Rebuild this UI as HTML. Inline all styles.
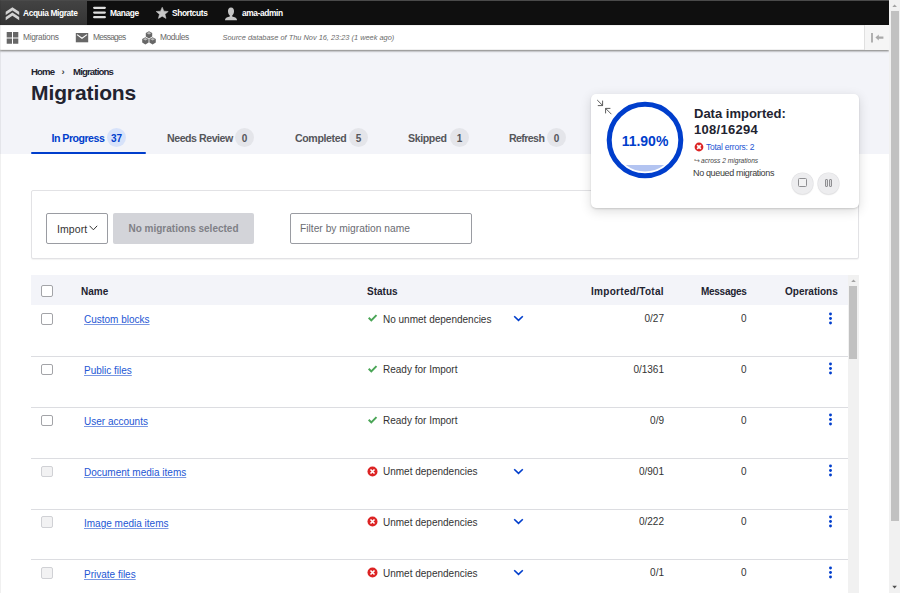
<!DOCTYPE html>
<html><head><meta charset="utf-8">
<style>
*{box-sizing:border-box;margin:0;padding:0}
html,body{width:900px;height:593px;overflow:hidden;background:#fff;font-family:"Liberation Sans",sans-serif;color:#222330}
.abs{position:absolute}
#page{position:absolute;left:0;top:0;width:889px;height:593px;overflow:hidden;background:#fff}
/* toolbar */
#bar{position:absolute;left:0;top:0;width:889px;height:25px;background:#0f0f0f;border-top:1px solid #4a4a4a}
#bar .t{position:absolute;top:-0.5px;height:24px;line-height:24px;color:#fff;font-weight:bold;font-size:8.4px;letter-spacing:-0.4px;white-space:nowrap}
#acq{position:absolute;left:0;top:0;width:87px;height:24px;background:linear-gradient(#434343,#343434)}
#tray{position:absolute;left:0;top:25px;width:889px;height:25px;background:#fff;box-shadow:inset 0 -1px 0 #f0f0f0,inset 0 1px 0 #f2f2f2,0 1px 2px 0 rgba(0,0,0,.55)}
#tray .t{position:absolute;top:0;height:25px;line-height:25px;color:#6a6a6a;font-size:8.4px;letter-spacing:-0.3px;white-space:nowrap}
#toggle{position:absolute;left:864px;top:0;width:25px;height:25px;background:#f5f5f5;border-left:1px solid #e0e0e0}
#hdr{position:absolute;left:0;top:51px;width:889px;height:103px;background:#f3f4f9}
.crumb{position:absolute;top:65.7px;font-size:9.6px;font-weight:bold;letter-spacing:-0.85px;color:#222330;white-space:nowrap;line-height:12px}
#title{position:absolute;left:31px;top:80.7px;font-size:21px;font-weight:bold;letter-spacing:-0.1px;line-height:24px;color:#222330}
.tab{position:absolute;top:130.8px;font-size:10.6px;font-weight:bold;color:#55565b;white-space:nowrap;line-height:14px}
.cnt{position:absolute;top:128px;width:19px;height:19px;border-radius:50%;background:#e4e5ea;font-size:10px;font-weight:bold;color:#55565b;text-align:center;line-height:21px}
/* scrollbar */
#sb{position:absolute;left:889px;top:0;width:11px;height:593px;background:#f1f1f1}
#sbthumb{position:absolute;left:2px;top:11px;width:8px;height:510px;background:#c1c1c1}
/* filter */
#filter{position:absolute;left:30.5px;top:189.8px;width:828px;height:69.2px;border:1px solid #e2e2e5;border-radius:2px;background:#fff;box-shadow:0 1px 1px rgba(0,0,0,.05)}
.sel{position:absolute;left:46px;top:213px;width:62px;height:31px;border:1px solid #9a9ca2;border-radius:2px;background:#fff}
.btn{position:absolute;left:113px;top:213px;width:141px;height:31px;border-radius:2px;background:#d3d4d9;color:#7f8086;font-weight:bold;font-size:10px;text-align:center;line-height:32px}
.inp{position:absolute;left:290px;top:213px;width:182px;height:31px;border:1px solid #9a9ca2;border-radius:2px;background:#fff;color:#6b6c72;font-size:10.25px;line-height:30.4px;padding-left:9px}
/* table */
#thead{position:absolute;left:31px;top:275px;width:817px;height:30px;background:#f3f4f9}
.th{position:absolute;top:285px;font-size:10px;font-weight:bold;color:#222330;line-height:13px;white-space:nowrap}
.cb{position:absolute;left:41px;width:11.5px;height:11.5px;border:1px solid #a3a4a8;border-radius:2px;background:#fff}
.cb.dis{border-color:#d0d1d5;background:#f2f2f3}
.row{position:absolute;left:31px;width:817px;height:1px;background:#dcdde1}
.lnk{position:absolute;left:84px;font-size:10px;color:#2456d4;text-decoration:underline;text-decoration-color:#7b98e2;text-underline-offset:0.6px;line-height:13px;white-space:nowrap}
.st{position:absolute;left:383px;font-size:10px;color:#333;line-height:13px;white-space:nowrap}
.num{position:absolute;font-size:10px;color:#333;line-height:13px;text-align:right;white-space:nowrap}
#isb{position:absolute;left:848px;top:275px;width:11px;height:318px;background:#f1f1f1}
#isbthumb{position:absolute;left:1px;top:11px;width:8px;height:73px;background:#c1c1c1}
/* card */
#card{position:absolute;left:591.2px;top:94px;width:267.8px;height:114px;background:#fff;border-radius:5px;box-shadow:0 1px 2px rgba(0,0,0,.14),0 3px 12px rgba(0,0,0,.14)}
</style></head>
<body>
<div id="page">
  <div id="hdr"></div>
  <div id="bar">
    <div id="acq"></div>
    <svg class="abs" style="left:0;top:0" width="22" height="22" viewBox="0 0 22 22"><path d="M5.7 10.8 L12.4 6.3 L19.2 10.8 L19.2 14 L12.4 9.5 L5.7 14 Z M5.7 16 L12.4 11.5 L19.2 16 L19.2 19.2 L12.4 14.7 L5.7 19.2 Z" fill="#d2d2d2"/></svg>
    <svg class="abs" style="left:92px;top:4.2px" width="15" height="15" viewBox="0 0 15 15"><path d="M2.2 2.8 H12.8 M2.2 7.6 H12.8 M2.2 12.2 H12.8" stroke="#dedede" stroke-width="2.3" stroke-linecap="round"/></svg>
    <svg class="abs" style="left:156px;top:5.8px" width="13" height="13" viewBox="0 0 13.6 14" preserveAspectRatio="none"><path d="M6.50 0.30 L8.26 4.47 L12.79 4.82 L9.35 7.83 L10.46 12.28 L6.50 9.90 L2.54 12.28 L3.65 7.83 L0.21 4.82 L4.74 4.47 Z" fill="#c8c8c8" stroke="#c8c8c8" stroke-width="0.6" stroke-linejoin="round"/></svg>
    <svg class="abs" style="left:224px;top:6px" width="14" height="14" viewBox="0 0 14 14"><path d="M7 0.5 C9.2 0.5 10.2 2.3 10 4.8 C9.8 7 8.8 8.2 8.2 8.6 L8.2 9.6 C10.5 10.2 12.7 10.8 13 12.8 L13 13.3 L1 13.3 L1 12.8 C1.3 10.8 3.5 10.2 5.8 9.6 L5.8 8.6 C5.2 8.2 4.2 7 4 4.8 C3.8 2.3 4.8 0.5 7 0.5 Z" fill="#c4c4c4"/></svg>
    <div class="t" style="left:23px">Acquia Migrate</div>
    <div class="t" style="left:110px">Manage</div>
    <div class="t" style="left:172px">Shortcuts</div>
    <div class="t" style="left:242px">ama-admin</div>
  </div>
  <div id="tray">
    <svg class="abs" style="left:6px;top:7px" width="13" height="12" viewBox="0 0 13 12"><path d="M0.7 0 H6 V5.4 H0.7 Z M7 0 H12.3 V5.4 H7 Z M0.7 6.4 H6 V11.8 H0.7 Z M7 6.4 H12.3 V11.8 H7 Z" fill="#676767"/></svg>
    <svg class="abs" style="left:75px;top:8px" width="14" height="10" viewBox="0 0 14 10"><path d="M0.8 0 H13.2 V9.3 H0.8 Z" fill="#676767"/><path d="M2 1.6 L7 5.2 L12 1.6" fill="none" stroke="#fff" stroke-width="1.1"/></svg>
    <svg class="abs" style="left:141px;top:6px" width="16" height="14" viewBox="0 0 16 14"><g fill="#676767"><path d="M8 0.2 L11.2 2 L11.2 5.6 L8 7.4 L4.8 5.6 L4.8 2 Z"/><path d="M4.4 6.2 L7.6 8 L7.6 11.6 L4.4 13.4 L1.2 11.6 L1.2 8 Z"/><path d="M11.6 6.2 L14.8 8 L14.8 11.6 L11.6 13.4 L8.4 11.6 L8.4 8 Z"/></g><g fill="#fff" opacity=".55"><path d="M8 1 L10.3 2.3 L8 3.6 L5.7 2.3 Z"/><path d="M4.4 7 L6.7 8.3 L4.4 9.6 L2.1 8.3 Z"/><path d="M11.6 7 L13.9 8.3 L11.6 9.6 L9.3 8.3 Z"/></g></svg>
    <div class="t" style="left:23px">Migrations</div>
    <div class="t" style="left:93px;letter-spacing:-0.72px">Messages</div>
    <div class="t" style="left:160px;letter-spacing:-0.42px">Modules</div>
    <div class="t" style="left:222.5px;font-style:italic;font-size:7.4px;letter-spacing:0;color:#6a6a6a">Source database of Thu Nov 16, 23:23 (1 week ago)</div>
    <div id="toggle"><svg class="abs" style="left:6px;top:7px" width="14" height="12" viewBox="0 0 14 12"><path d="M1 1 V10.6" stroke="#a9a9a9" stroke-width="1.8"/><path d="M4.4 5.6 L7.8 2.6 V4.4 H12.4 V6.8 H7.8 V8.6 Z" fill="#a9a9a9"/></svg></div>
  </div>

  <div class="crumb" style="left:31px">Home</div>
  <div class="crumb" style="left:61.5px;color:#444">›</div>
  <div class="crumb" style="left:73px">Migrations</div>
  <div id="title">Migrations</div>

  <div class="tab" style="left:51.5px;color:#003ecc;letter-spacing:-0.5px">In Progress</div>
  <div class="cnt" style="left:107px;background:#d7e2fa;color:#003ecc">37</div>
  <div class="abs" style="left:31px;top:152px;width:115px;height:2px;border-radius:1px;background:#003ecc"></div>
  <div class="tab" style="left:167px;letter-spacing:-0.45px">Needs Review</div>
  <div class="cnt" style="left:235px">0</div>
  <div class="tab" style="left:295px;letter-spacing:-0.38px">Completed</div>
  <div class="cnt" style="left:349px">5</div>
  <div class="tab" style="left:408px;letter-spacing:-0.38px">Skipped</div>
  <div class="cnt" style="left:450px">1</div>
  <div class="tab" style="left:509px;letter-spacing:-0.6px">Refresh</div>
  <div class="cnt" style="left:547px">0</div>

  <div id="filter"></div>
  <div class="sel"></div>
  <div class="abs" style="left:57px;top:223px;font-size:10.5px;letter-spacing:0.1px;color:#333;line-height:13px">Import</div>
  <svg class="abs" style="left:88.5px;top:225px" width="10" height="7" viewBox="0 0 10 7"><path d="M0.6 0.8 L4.4 4.8 L8.2 0.8" fill="none" stroke="#333" stroke-width="1"/></svg>
  <div class="btn">No migrations selected</div>
  <div class="inp">Filter by migration name</div>

  <div id="thead"></div>
  <div class="cb" style="top:285px"></div>
  <div class="th" style="left:81px">Name</div>
  <div class="th" style="left:367px">Status</div>
  <div class="th" style="left:591px;letter-spacing:0.3px">Imported/Total</div>
  <div class="th" style="left:701px;letter-spacing:-0.28px">Messages</div>
  <div class="th" style="left:785px">Operations</div>

<!--ROWS-->
  <div class="cb" style="top:313.0px"></div>
  <div class="lnk" style="top:313.4px">Custom blocks</div>
<svg class="abs" style="left:368px;top:314.2px" width="10" height="9" viewBox="0 0 10 9"><path d="M0.7 3.8 L3.3 6.4 L8.5 1.1" fill="none" stroke="#4aa556" stroke-width="2"/></svg>
  <div class="st" style="top:312.5px">No unmet dependencies</div>
<svg class="abs" style="left:513px;top:315.0px" width="11" height="7" viewBox="0 0 11 7"><path d="M1.2 1.2 L5.5 5.4 L9.8 1.2" fill="none" stroke="#003ecc" stroke-width="1.6"/></svg>
  <div class="num" style="right:225px;top:312.0px">0/27</div>
  <div class="num" style="left:741px;top:312.0px">0</div>
<svg class="abs" style="left:828px;top:311.5px" width="5" height="14" viewBox="0 0 5 14"><circle cx="2.5" cy="2" r="1.45" fill="#003ecc"/><circle cx="2.5" cy="6.5" r="1.45" fill="#003ecc"/><circle cx="2.5" cy="11" r="1.45" fill="#003ecc"/></svg>
  <div class="row" style="top:356.00px"></div>
  <div class="cb" style="top:363.85px"></div>
  <div class="lnk" style="top:364.25px">Public files</div>
<svg class="abs" style="left:368px;top:365.05px" width="10" height="9" viewBox="0 0 10 9"><path d="M0.7 3.8 L3.3 6.4 L8.5 1.1" fill="none" stroke="#4aa556" stroke-width="2"/></svg>
  <div class="st" style="top:363.35px">Ready for Import</div>
  <div class="num" style="right:225px;top:362.85px">0/1361</div>
  <div class="num" style="left:741px;top:362.85px">0</div>
<svg class="abs" style="left:828px;top:362.35px" width="5" height="14" viewBox="0 0 5 14"><circle cx="2.5" cy="2" r="1.45" fill="#003ecc"/><circle cx="2.5" cy="6.5" r="1.45" fill="#003ecc"/><circle cx="2.5" cy="11" r="1.45" fill="#003ecc"/></svg>
  <div class="row" style="top:406.85px"></div>
  <div class="cb" style="top:414.7px"></div>
  <div class="lnk" style="top:415.09999999999997px">User accounts</div>
<svg class="abs" style="left:368px;top:415.9px" width="10" height="9" viewBox="0 0 10 9"><path d="M0.7 3.8 L3.3 6.4 L8.5 1.1" fill="none" stroke="#4aa556" stroke-width="2"/></svg>
  <div class="st" style="top:414.2px">Ready for Import</div>
  <div class="num" style="right:225px;top:413.7px">0/9</div>
  <div class="num" style="left:741px;top:413.7px">0</div>
<svg class="abs" style="left:828px;top:413.2px" width="5" height="14" viewBox="0 0 5 14"><circle cx="2.5" cy="2" r="1.45" fill="#003ecc"/><circle cx="2.5" cy="6.5" r="1.45" fill="#003ecc"/><circle cx="2.5" cy="11" r="1.45" fill="#003ecc"/></svg>
  <div class="row" style="top:457.70px"></div>
  <div class="cb dis" style="top:465.55px"></div>
  <div class="lnk" style="top:465.95px">Document media items</div>
<svg class="abs" style="left:367px;top:465.55px" width="11" height="11" viewBox="0 0 11 11"><circle cx="5.5" cy="5.5" r="5" fill="#dc2323"/><path d="M3.5 3.5 L7.5 7.5 M7.5 3.5 L3.5 7.5" stroke="#fff" stroke-width="1.6"/></svg>
  <div class="st" style="top:465.05px">Unmet dependencies</div>
<svg class="abs" style="left:513px;top:467.55px" width="11" height="7" viewBox="0 0 11 7"><path d="M1.2 1.2 L5.5 5.4 L9.8 1.2" fill="none" stroke="#003ecc" stroke-width="1.6"/></svg>
  <div class="num" style="right:225px;top:464.55px">0/901</div>
  <div class="num" style="left:741px;top:464.55px">0</div>
<svg class="abs" style="left:828px;top:464.05px" width="5" height="14" viewBox="0 0 5 14"><circle cx="2.5" cy="2" r="1.45" fill="#003ecc"/><circle cx="2.5" cy="6.5" r="1.45" fill="#003ecc"/><circle cx="2.5" cy="11" r="1.45" fill="#003ecc"/></svg>
  <div class="row" style="top:508.55px"></div>
  <div class="cb dis" style="top:516.4px"></div>
  <div class="lnk" style="top:516.8px">Image media items</div>
<svg class="abs" style="left:367px;top:516.4px" width="11" height="11" viewBox="0 0 11 11"><circle cx="5.5" cy="5.5" r="5" fill="#dc2323"/><path d="M3.5 3.5 L7.5 7.5 M7.5 3.5 L3.5 7.5" stroke="#fff" stroke-width="1.6"/></svg>
  <div class="st" style="top:515.9px">Unmet dependencies</div>
<svg class="abs" style="left:513px;top:518.4px" width="11" height="7" viewBox="0 0 11 7"><path d="M1.2 1.2 L5.5 5.4 L9.8 1.2" fill="none" stroke="#003ecc" stroke-width="1.6"/></svg>
  <div class="num" style="right:225px;top:515.4px">0/222</div>
  <div class="num" style="left:741px;top:515.4px">0</div>
<svg class="abs" style="left:828px;top:514.9px" width="5" height="14" viewBox="0 0 5 14"><circle cx="2.5" cy="2" r="1.45" fill="#003ecc"/><circle cx="2.5" cy="6.5" r="1.45" fill="#003ecc"/><circle cx="2.5" cy="11" r="1.45" fill="#003ecc"/></svg>
  <div class="row" style="top:559.40px"></div>
  <div class="cb dis" style="top:567.25px"></div>
  <div class="lnk" style="top:567.65px">Private files</div>
<svg class="abs" style="left:367px;top:567.25px" width="11" height="11" viewBox="0 0 11 11"><circle cx="5.5" cy="5.5" r="5" fill="#dc2323"/><path d="M3.5 3.5 L7.5 7.5 M7.5 3.5 L3.5 7.5" stroke="#fff" stroke-width="1.6"/></svg>
  <div class="st" style="top:566.75px">Unmet dependencies</div>
<svg class="abs" style="left:513px;top:569.25px" width="11" height="7" viewBox="0 0 11 7"><path d="M1.2 1.2 L5.5 5.4 L9.8 1.2" fill="none" stroke="#003ecc" stroke-width="1.6"/></svg>
  <div class="num" style="right:225px;top:566.25px">0/1</div>
  <div class="num" style="left:741px;top:566.25px">0</div>
<svg class="abs" style="left:828px;top:565.75px" width="5" height="14" viewBox="0 0 5 14"><circle cx="2.5" cy="2" r="1.45" fill="#003ecc"/><circle cx="2.5" cy="6.5" r="1.45" fill="#003ecc"/><circle cx="2.5" cy="11" r="1.45" fill="#003ecc"/></svg>
  <div class="row" style="top:610.25px"></div>
<!--/ROWS-->
  <div id="isb"><div id="isbthumb"></div><svg class="abs" style="left:0;top:0" width="11" height="11" viewBox="0 0 11 11"><path d="M3.2 7 L5.5 4.5 L7.8 7 Z" fill="#a3a3a3"/></svg></div>

  <div id="card"></div>
  <svg class="abs" style="left:595px;top:98px" width="20" height="20" viewBox="0 0 20 20">
    <path d="M2.2 2 L7.6 7.4 M7.6 2.6 V7.6 H2.8" fill="none" stroke="#404040" stroke-width="0.85"/>
    <path d="M16.4 16.2 L10.6 10.4 M10.6 15.4 V10.4 H15.4" fill="none" stroke="#404040" stroke-width="0.85"/>
  </svg>
  <svg class="abs" style="left:605px;top:100px" width="80" height="80" viewBox="0 0 80 80">
    <path d="M20.8 65 A31.5 31.5 0 0 0 59.2 65 Z" fill="#b3c4f1"/>
    <circle cx="40" cy="40" r="35.8" fill="none" stroke="#003ecc" stroke-width="5"/>
  </svg>
  <div class="abs" style="left:605px;top:133px;width:80px;text-align:center;font-size:14px;font-weight:bold;color:#003ecc;line-height:17px">11.90%</div>
  <div class="abs" style="left:694px;top:106px;font-size:13px;font-weight:bold;color:#222330;line-height:15px;white-space:nowrap">Data imported:</div>
  <div class="abs" style="left:694px;top:122px;font-size:13px;font-weight:bold;color:#222330;line-height:15px;white-space:nowrap;letter-spacing:0.3px">108/16294</div>
  <svg class="abs" style="left:693.5px;top:142px" width="10" height="10" viewBox="0 0 10 10"><circle cx="5" cy="5" r="4.4" fill="#dc2323"/><path d="M3.2 3.2 L6.8 6.8 M6.8 3.2 L3.2 6.8" stroke="#fff" stroke-width="1.7"/></svg>
  <div class="abs" style="left:706px;top:141px;font-size:8.5px;color:#2456d3;line-height:12px;white-space:nowrap;letter-spacing:-0.25px">Total errors: 2</div>
  <div class="abs" style="left:694px;top:156px;font-size:7px;color:#666;line-height:10px;white-space:nowrap">&#8618;</div>
  <div class="abs" style="left:701px;top:156px;font-size:6.6px;font-style:italic;color:#444;line-height:10px;white-space:nowrap">across 2 migrations</div>
  <div class="abs" style="left:693px;top:167px;font-size:9px;color:#3a3a3a;line-height:12px;white-space:nowrap;letter-spacing:-0.35px">No queued migrations</div>
  <div class="abs" style="left:792.3px;top:173px;width:20.5px;height:20.5px;border-radius:50%;background:#ededef;box-shadow:0 0 0 0.6px #e2e2e4,0 1px 1.5px rgba(0,0,0,.12)"></div>
  <div class="abs" style="left:798.3px;top:178px;width:8.8px;height:8.8px;border:1px solid #8f8f92;border-radius:1.5px;background:#f2f2f3"></div>
  <div class="abs" style="left:818px;top:173px;width:20.5px;height:20.5px;border-radius:50%;background:#ededef;box-shadow:0 0 0 0.6px #e2e2e4,0 1px 1.5px rgba(0,0,0,.12)"></div>
  <div class="abs" style="left:825px;top:179px;width:3px;height:8px;border:1px solid #8f8f92;border-radius:1px;background:#dcdcde"></div>
  <div class="abs" style="left:828.6px;top:179px;width:3px;height:8px;border:1px solid #8f8f92;border-radius:1px;background:#dcdcde"></div>
</div>
<div class="abs" style="left:0;top:0;width:1px;height:593px;background:rgba(0,0,0,.06)"></div>
<div id="sb"><div id="sbthumb"></div><svg class="abs" style="left:0;top:0" width="11" height="11" viewBox="0 0 11 11"><path d="M3.3 7 L5.6 4.5 L7.9 7 Z" fill="#a3a3a3"/></svg><svg class="abs" style="left:0;top:582px" width="11" height="11" viewBox="0 0 11 11"><path d="M3.3 3.8 L5.6 6.6 L7.9 3.8 Z" fill="#505050"/></svg></div>
</body></html>
